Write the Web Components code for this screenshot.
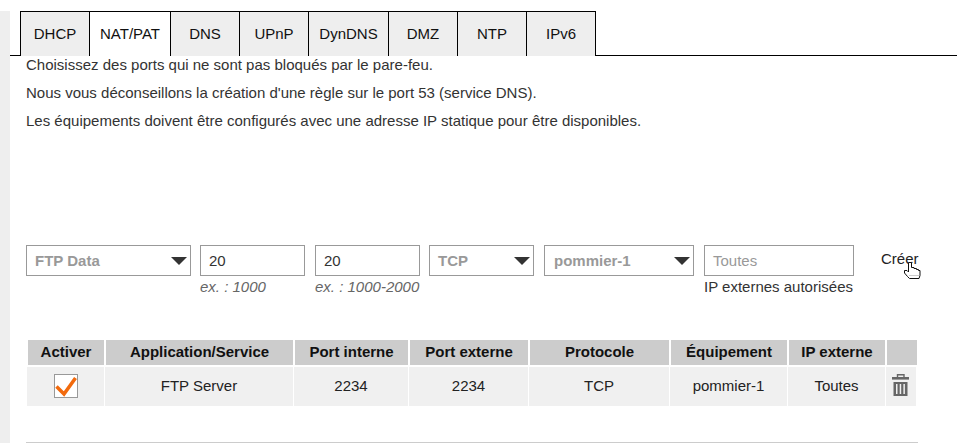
<!DOCTYPE html>
<html lang="fr">
<head>
<meta charset="utf-8">
<title>NAT/PAT</title>
<style>
  html, body { margin: 0; height: 100%; background: #fff; overflow: hidden; }
  body { font-family: "Liberation Sans", Arial, sans-serif; font-size: 15px; color: #333; }
</style>
</head>
<body>
<box-settings>
  <tab-bar>
    <tab-item>DHCP</tab-item>
    <tab-item active style="width:82px">NAT/PAT</tab-item>
    <tab-item>DNS</tab-item>
    <tab-item>UPnP</tab-item>
    <tab-item style="width:81px">DynDNS</tab-item>
    <tab-item>DMZ</tab-item>
    <tab-item>NTP</tab-item>
    <tab-item>IPv6</tab-item>
  </tab-bar>
  <info-text>
    <p>Choisissez des ports qui ne sont pas bloqués par le pare-feu.</p>
    <p>Nous vous déconseillons la création d'une règle sur le port 53 (service DNS).</p>
    <p>Les équipements doivent être configurés avec une adresse IP statique pour être disponibles.</p>
  </info-text>
  <rule-form></rule-form>
  <rule-table></rule-table>
</box-settings>

<script>
// Page frame: grey strip on the left, content on the right
class BoxSettings extends HTMLElement {
  constructor() {
    super();
    const shadow = this.attachShadow({ mode: "open" });
    shadow.innerHTML = `
      <style>
        :host { display: block; height: 443px; border-left: 10px solid #eee; box-sizing: border-box; }
      </style>
      <slot></slot>
    `;
  }
}

class TabBar extends HTMLElement {
  constructor() {
    super();
    const shadow = this.attachShadow({ mode: "open" });
    shadow.innerHTML = `
      <style>
        :host {
          display: flex;
          margin-top: 11px;
          padding-left: 10px;
          height: 45px;
          box-sizing: border-box;
          border-bottom: 1px solid #000;
        }
      </style>
      <slot></slot>
    `;
  }
}

class TabItem extends HTMLElement {
  constructor() {
    super();
    const shadow = this.attachShadow({ mode: "open" });
    shadow.innerHTML = `
      <style>
        :host {
          display: flex;
          align-items: center;
          justify-content: center;
          width: 70px;
          height: 45px;
          box-sizing: border-box;
          margin-right: -1px;
          padding-bottom: 2px;
          border: 1px solid #000;
          border-bottom: 0;
          background: #eee;
          color: #111;
          font-size: 15px;
        }
        :host([active]) { background: #fff; }
      </style>
      <slot></slot>
    `;
  }
}

class InfoText extends HTMLElement {
  constructor() {
    super();
    const shadow = this.attachShadow({ mode: "open" });
    shadow.innerHTML = `
      <style>
        :host { display: block; padding-left: 16px; height: 189px; }
        ::slotted(p) { margin: 0 0 11px; line-height: 17px; }
      </style>
      <slot></slot>
    `;
  }
}

// Custom select with the black triangle on the right
class FakeSelect extends HTMLElement {
  constructor() {
    super();
    const shadow = this.attachShadow({ mode: "open" });
    shadow.innerHTML = `
      <style>
        :host {
          display: flex;
          align-items: center;
          justify-content: space-between;
          height: 31px;
          box-sizing: border-box;
          border: 1px solid #999;
          padding: 0 3px 0 8px;
          font-weight: bold;
          color: #999;
          background: #fff;
        }
        svg { display: block; }
      </style>
      <slot></slot>
      <svg width="16" height="8" viewBox="0 0 16 8"><path d="M0 0H16L8 8Z" fill="#333"/></svg>
    `;
  }
}

class FormField extends HTMLElement {
  constructor() {
    super();
    const shadow = this.attachShadow({ mode: "open" });
    shadow.innerHTML = `
      <style>
        :host { display: block; }
        .box {
          display: flex;
          align-items: center;
          height: 31px;
          box-sizing: border-box;
          border: 1px solid #999;
          padding: 0 8px;
        }
        :host([placeholder]) .box { color: #999; }
        .hint { line-height: 17px; margin-top: 2px; white-space: nowrap; }
        :host([italic]) .hint { font-style: italic; color: #666; }
      </style>
      <div class="box"><slot></slot></div>
      <div class="hint"><slot name="hint"></slot></div>
    `;
  }
}

class RuleForm extends HTMLElement {
  constructor() {
    super();
    const shadow = this.attachShadow({ mode: "open" });
    shadow.innerHTML = `
      <style>
        :host {
          display: flex;
          gap: 9px;
          align-items: flex-start;
          margin-left: 16px;
          height: 95px;
        }
        .w165 { width: 165px; }
        .w105 { width: 105px; }
        .w150 { width: 150px; }
        .shift { margin-left: 1px; }
        .create { position: relative; margin-left: 18px; padding-top: 5px; line-height: 17px; color: #222; }
        .hand { position: absolute; left: 22px; top: 16px; }
      </style>
      <fake-select class="w165">FTP Data</fake-select>
      <form-field class="w105" italic>20<span slot="hint">ex. : 1000</span></form-field>
      <form-field class="w105 shift" italic>20<span slot="hint">ex. : 1000-2000</span></form-field>
      <fake-select class="w105">TCP</fake-select>
      <fake-select class="w150 shift" style="padding-left:9px">pommier-1</fake-select>
      <form-field class="w150 shift" placeholder>Toutes<span slot="hint">IP externes autorisées</span></form-field>
      <div class="create">Créer
        <!-- main du curseur, par-dessus le bouton -->
        <svg class="hand" width="18" height="19" viewBox="0 0 18 19">
          <path d="M5.500 1.500h3v5h2.500v1h2.500v1h2v1h1.500v5l-1 3h-9.500l-2-2-3-3.500v-2.500h2.500l1.500 1.500z" fill="#fff" stroke="#111" stroke-width="1"/>
          <path d="M6.500 14.500h9" stroke="#999" stroke-dasharray="1 1"/>
        </svg>
      </div>
    `;
  }
}

class RuleTable extends HTMLElement {
  constructor() {
    super();
    const shadow = this.attachShadow({ mode: "open" });
    shadow.innerHTML = `
      <style>
        :host { display: block; margin-left: 16px; width: 892px; }
        .head, .row { display: grid; text-align: center; }
        .head {
          grid-template-columns: 76px 187px 113px 118px 139px 116px 96px 30px;
          column-gap: 2px;
          margin-left: 2px;
          font-weight: bold;
          color: #111;
        }
        .head div { background: #ccc; height: 25px; line-height: 24px; }
        .row {
          grid-template-columns: 77px 188px 114px 119px 140px 117px 97px 30px;
          column-gap: 1px;
          margin-left: 1px;
          margin-top: 2px;
          color: #222;
        }
        .row div {
          background: #f0f0f0;
          height: 39px;
          box-sizing: border-box;
          padding-bottom: 2px;
          display: flex;
          align-items: center;
          justify-content: center;
        }
        .row div.icon { padding-bottom: 1px; }
        .check { width: 24px; height: 24px; box-sizing: border-box; border: 1px solid #999; background: #fff; display: block; }
        hr { border: 0; border-top: 1px solid #ccc; margin: 36px 0 0; }
      </style>
      <div class="head">
        <div>Activer</div><div>Application/Service</div><div>Port interne</div><div>Port externe</div>
        <div>Protocole</div><div>Équipement</div><div>IP externe</div><div></div>
      </div>
      <div class="row">
        <div class="icon">
          <svg class="check" viewBox="0 0 22 22"><path d="M1.500 11.500 9 19 20.500 3" fill="none" stroke="#f26a0d" stroke-width="3.500"/></svg>
        </div>
        <div>FTP Server</div><div>2234</div><div>2234</div><div>TCP</div><div>pommier-1</div><div>Toutes</div>
        <div class="icon">
          <svg width="18" height="24" viewBox="0 0 18 24">
            <path d="M5.500 3V.8h6.500V3" fill="none" stroke="#666" stroke-width="1.400"/>
            <path d="M0 3h17v2.600H0z" fill="#666"/>
            <path d="M1.500 8h14v14h-14zM4 10v10h1.500V10zM7.700 10v10h1.500V10zM11.400 10v10h1.500V10z" fill="#666" fill-rule="evenodd"/>
          </svg>
        </div>
      </div>
      <hr>
    `;
  }
}

customElements.define("box-settings", BoxSettings);
customElements.define("tab-bar", TabBar);
customElements.define("tab-item", TabItem);
customElements.define("info-text", InfoText);
customElements.define("fake-select", FakeSelect);
customElements.define("form-field", FormField);
customElements.define("rule-form", RuleForm);
customElements.define("rule-table", RuleTable);
</script>
</body>
</html>
